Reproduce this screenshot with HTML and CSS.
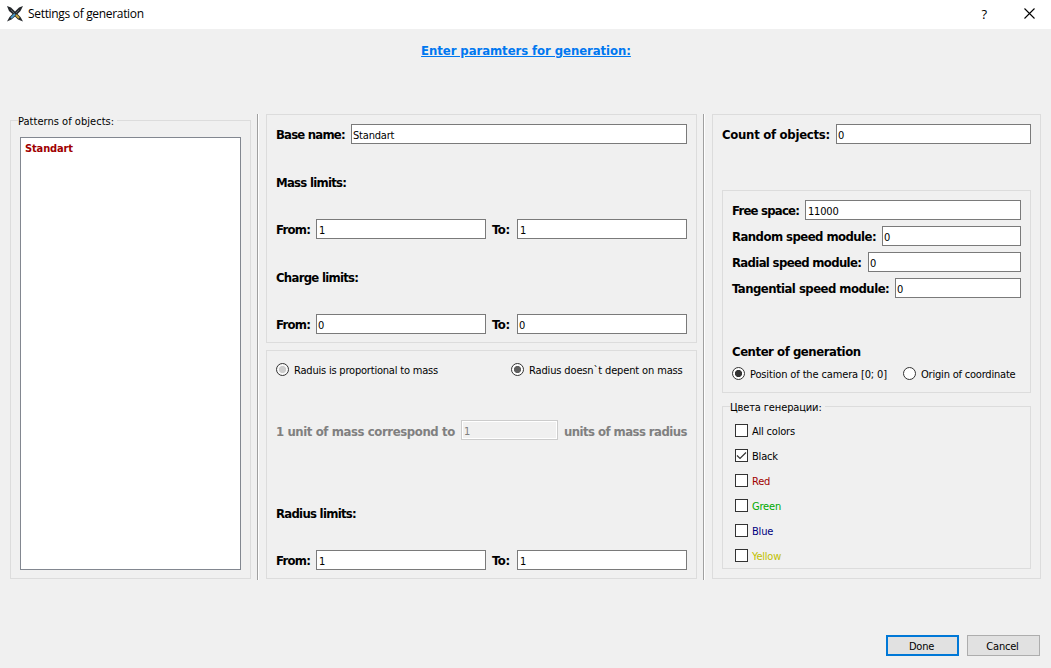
FILE: index.html
```
<!DOCTYPE html>
<html lang="en">
<head>
<meta charset="utf-8">
<title>Settings of generation</title>
<link rel="stylesheet" href="styles.css">
</head>
<body>
<div class="window">
  <header class="titlebar">
    <svg class="logo" width="16" height="16" viewBox="0 0 16 16">
      <path d="M0 0L4 1.500 8 5.500 12 1.500 16 0 13.500 5 10.500 8 13.500 11 16 15.500 11 13.500 8 10.500 4.500 13.500 0 15.500 2.500 11 5.500 8 2 5Z" fill="#25282c"/>
      <path d="M4 12L8 8" stroke="#4a9ccb" stroke-width="1.800"/>
      <path d="M9 9L12 12" stroke="#c9a83c" stroke-width="2"/>
      <path d="M4 4L7 7M12 4L9 7" stroke="#59636b"/>
    </svg>
    <span class="caption">Settings of generation</span>
    <span class="help">?</span>
    <svg class="close" width="11" height="11" viewBox="0 0 11 11"><path d="M.5 .5L10.500 10.500M10.500 .5L.5 10.500" stroke="#000" stroke-width="1.100"/></svg>
  </header>
  <h1 class="heading"><span>Enter paramters for generation:</span></h1>
  <main class="columns">
    <section class="group patterns">
      <span class="legend">Patterns of objects:</span>
      <div class="list"><span class="item">Standart</span></div>
    </section>
    <div class="rule"></div>
    <div class="middle">
      <section class="group limits">
        <div class="row"><label class="lbl w-base">Base name:</label><div class="input name">Standart</div></div>
        <div class="lbl sub mass">Mass limits:</div>
        <div class="row"><label class="lbl w-from">From:</label><div class="input">1</div><label class="lbl w-to">To:</label><div class="input">1</div></div>
        <div class="lbl sub mass">Charge limits:</div>
        <div class="row"><label class="lbl w-from">From:</label><div class="input zero">0</div><label class="lbl w-to">To:</label><div class="input zero">0</div></div>
      </section>
      <section class="group radius">
        <div class="radios r-mass">
          <label class="opt o1"><i class="radio soft"></i><span>Raduis is proportional to mass</span></label>
          <label class="opt o2"><i class="radio on dim"></i><span>Radius doesn`t depent on mass</span></label>
        </div>
        <div class="row disabled"><label class="lbl w-unit">1 unit of mass correspond to</label><div class="input">1</div><label class="lbl w-units">units of mass radius</label></div>
        <div class="lbl sub rad">Radius limits:</div>
        <div class="row"><label class="lbl w-from">From:</label><div class="input">1</div><label class="lbl w-to">To:</label><div class="input">1</div></div>
      </section>
    </div>
    <div class="rule"></div>
    <section class="group right">
      <div class="row"><label class="lbl w-count">Count of objects:</label><div class="input zero">0</div></div>
      <div class="group space">
        <div class="row"><label class="lbl w-free">Free space:</label><div class="input">11000</div></div>
        <div class="row"><label class="lbl w-random">Random speed module:</label><div class="input zero">0</div></div>
        <div class="row"><label class="lbl w-radial">Radial speed module:</label><div class="input zero">0</div></div>
        <div class="row"><label class="lbl w-tang">Tangential speed module:</label><div class="input zero">0</div></div>
        <div class="lbl center">Center of generation</div>
        <div class="radios">
          <label class="opt o3"><i class="radio on"></i><span>Position of the camera [0; 0]</span></label>
          <label class="opt o4"><i class="radio"></i><span>Origin of coordinate</span></label>
        </div>
      </div>
      <div class="group colors">
        <span class="legend ru" lang="ru">Цвета генерации:</span>
        <label class="check"><i class="box"></i><span>All colors</span></label>
        <label class="check"><i class="box"><svg width="11" height="11" viewBox="0 0 11 11"><path d="M1 5.500L4 8.500 10 2.500" fill="none" stroke="#333" stroke-width="1.200"/></svg></i><span>Black</span></label>
        <label class="check red"><i class="box"></i><span>Red</span></label>
        <label class="check green"><i class="box"></i><span>Green</span></label>
        <label class="check blue"><i class="box"></i><span>Blue</span></label>
        <label class="check yellow"><i class="box"></i><span>Yellow</span></label>
      </div>
    </section>
  </main>
  <footer class="buttons"><button class="btn default">Done</button><button class="btn">Cancel</button></footer>
</div>
</body>
</html>
```
FILE: styles.css
```
* { box-sizing: border-box; }
body { margin: 0; background: #f0f0f0; }
.window { width: 1051px; height: 668px; display: flex; flex-direction: column; font: 11px/14px "DejaVu Sans Condensed", "DejaVu Sans", sans-serif; letter-spacing: -0.2px; color: #000; white-space: nowrap; overflow: hidden; }
.titlebar { height: 29px; background: #fff; display: flex; align-items: center; padding: 0 17px 2px 7px; }
.caption { font: 12px/16px "Open Sans", sans-serif; letter-spacing: -0.32px; margin-left: 5px; flex: 1; }
.help { font: 13px/16px "Open Sans", sans-serif; margin-right: 37px; }
.close { margin-right: -1px; }
.heading { margin: 0; height: 85px; padding: 14px 0 0 1px; text-align: center; font-size: 13px; line-height: 16px; color: #0078f0; letter-spacing: -0.07px; text-decoration: underline; }
.columns { display: flex; height: 466px; padding: 0 10px; }
.group { border: 1px solid #dcdcdc; padding: 9px; }
.legend { background: #f0f0f0; align-self: flex-start; height: 14px; line-height: 16px; margin: -7px 0 0 -2px; padding-right: 3px; letter-spacing: -0.13px; }
.patterns { width: 241px; height: 459px; margin-top: 6px; display: flex; flex-direction: column; padding-top: 0; padding-bottom: 8px; }
.patterns .legend { letter-spacing: 0.03px; }
.list { flex: 1; margin-top: 9px; border: 1px solid #828790; background: #fff; padding: 4px; color: #a00000; font-weight: bold; letter-spacing: -0.13px; }
.rule { width: 2px; margin-left: 6px; border-left: 1px solid #a0a0a0; border-right: 1px solid #fff; }
.middle { width: 431px; margin-left: 7px; display: flex; flex-direction: column; gap: 7px; }
.limits, .radius { height: 229px; }
.row { display: flex; height: 20px; }
.lbl { font-size: 13px; font-weight: bold; line-height: 22px; letter-spacing: -0.4px; flex: none; }
.input { flex: 1; border: 1px solid #7a7a7a; background: #fff; padding: 4px 2px 0; line-height: 14px; }
.input.name, .input.zero { padding-left: 1px; }
.w-base { width: 75px; letter-spacing: -0.8px; }
.w-from { width: 40px; letter-spacing: -0.75px; }
.w-to { width: 31px; padding-left: 6px; }
.sub { height: 20px; letter-spacing: -0.72px; }
.mass { margin: 28px 0 27px; }
.radios { display: flex; height: 14px; align-items: flex-start; }
.opt { display: flex; align-items: flex-start; gap: 5px; line-height: 15px; }
.radio { width: 13px; height: 13px; border: 1px solid #333; border-radius: 50%; background: #fff; flex: none; }
.radio.on { background: radial-gradient(circle, #333 3.200px, #fff 4px); }
.radio.dim { background: radial-gradient(circle, #606060 3.200px, #fff 4px); }
.radio.soft { background: radial-gradient(circle, #ccc 3.200px, #f8f8f8 4px); }
.r-mass { margin-top: 3px; }
.o1 { width: 235px; }
.o2, .o3 { letter-spacing: -0.14px; }
.o3 { width: 171px; }
.disabled { margin-top: 43px; color: #808080; }
.disabled .input { flex: 0 0 97px; border-color: #ccc; background: #f0f0f0; box-shadow: inset 0 0 0 1px #fff; }
.w-unit { width: 185px; line-height: 23px; }
.w-units { padding-left: 6px; line-height: 23px; letter-spacing: -0.55px; }
.rad { margin: 63px 0 27px; }
.right { width: 329px; height: 465px; margin-left: 7px; }
.w-count { width: 114px; letter-spacing: -0.28px; }
.w-free { width: 73px; letter-spacing: -0.77px; }
.w-random { width: 150px; letter-spacing: -0.55px; }
.w-radial { width: 136px; letter-spacing: -0.66px; }
.w-tang { width: 163px; letter-spacing: -0.53px; }
.space { height: 203px; margin-top: 46px; }
.space .row { margin-bottom: 6px; }
.center { margin-top: 43px; height: 26px; letter-spacing: -0.45px; }
.colors { height: 163px; margin-top: 13px; padding: 0 12px; display: flex; flex-direction: column; }
.colors .legend { margin: -7px 0 10px -5px; }
.check { display: flex; align-items: flex-start; gap: 4px; height: 13px; line-height: 16px; margin-bottom: 12px; flex: none; }
.box { width: 13px; height: 13px; border: 1px solid #333; background: #fff; flex: none; }
.box svg { display: block; }
.red { color: #a00000; }
.green { color: #00aa00; }
.blue { color: #000080; }
.yellow { color: #c0c000; }
.buttons { margin-top: 55px; display: flex; justify-content: flex-end; gap: 8px; padding-right: 11px; }
.btn { width: 73px; height: 21px; padding: 2px 2px 0 0; border: 1px solid #adadad; background: #e1e1e1; font: inherit; letter-spacing: inherit; color: #000; }
.default { border: 2px solid #0078d7; }
```
